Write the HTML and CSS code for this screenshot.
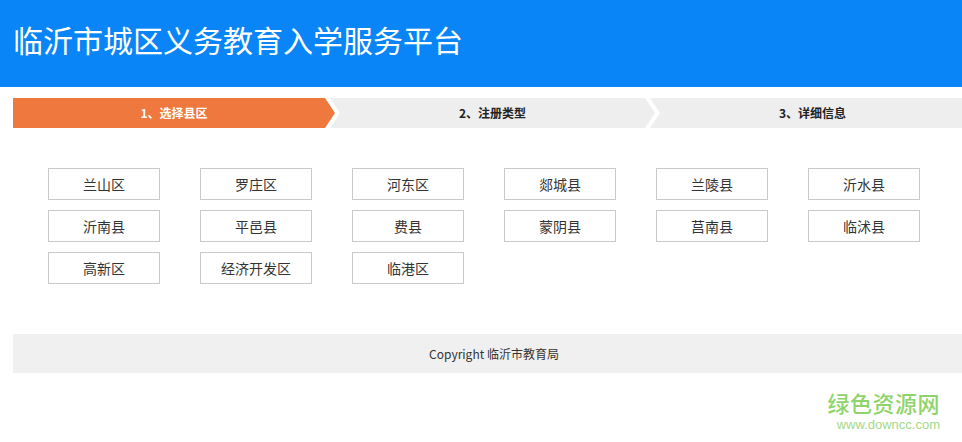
FILE: index.html
```html
<!DOCTYPE html>
<html lang="zh-CN">
<head>
<meta charset="utf-8">
<title>临沂市城区义务教育入学服务平台</title>
<link rel="stylesheet" href="styles.css">
</head>
<body>
<div class="header"><h1 class="title">临沂市城区义务教育入学服务平台</h1></div>
<div class="steps">
  <div class="step step-first step-active">1、选择县区</div>
  <div class="step step-mid">2、注册类型</div>
  <div class="step step-last">3、详细信息</div>
</div>
<div class="districts">
  <a class="district">兰山区</a>
  <a class="district">罗庄区</a>
  <a class="district">河东区</a>
  <a class="district">郯城县</a>
  <a class="district">兰陵县</a>
  <a class="district">沂水县</a>
  <a class="district">沂南县</a>
  <a class="district">平邑县</a>
  <a class="district">费县</a>
  <a class="district">蒙阴县</a>
  <a class="district">莒南县</a>
  <a class="district">临沭县</a>
  <a class="district">高新区</a>
  <a class="district">经济开发区</a>
  <a class="district">临港区</a>
</div>
<div class="footer">Copyright 临沂市教育局</div>
<div class="watermark">
  <div class="wm-cn">绿色资源网</div>
  <div class="wm-en">www.downcc.com</div>
</div>
</body>
</html>
```
FILE: styles.css
```css
html, body {
  margin: 0;
  padding: 0;
  overflow: hidden;
  background: #fff;
}
body {
  font-family: "Noto Sans CJK SC", "Noto Sans", sans-serif;
  color: #333;
  width: 962px;
}
.header {
  height: 87px;
  background: #0a85f7;
  box-sizing: border-box;
  padding: 22px 0 0 13px;
}
.title {
  margin: 0;
  font-size: 30px;
  font-weight: 400;
  line-height: 34px;
  color: #fff;
  white-space: nowrap;
}
.steps {
  display: flex;
  margin: 11px 0 0 13px;
  height: 30px;
  width: 962px;
}
.step {
  flex: none;
  height: 30px;
  line-height: 30px;
  text-align: center;
  font-size: 12px;
  font-weight: 700;
  background: #eeeeee;
  color: #222;
}
.step-first {
  width: 322px;
  clip-path: polygon(0 0, calc(100% - 10px) 0, 100% 50%, calc(100% - 10px) 100%, 0 100%);
}
.step-mid {
  width: 325px;
  margin-left: -5px;
  clip-path: polygon(0 0, calc(100% - 10px) 0, 100% 50%, calc(100% - 10px) 100%, 0 100%, 10px 50%);
}
.step-last {
  width: 325px;
  margin-left: -5px;
  clip-path: polygon(0 0, 100% 0, 100% 100%, 0 100%, 10px 50%);
}
.step-active {
  background: #ee783d;
  color: #fff;
}
.districts {
  display: grid;
  grid-template-columns: repeat(6, 112px);
  column-gap: 40px;
  row-gap: 10px;
  margin: 40px 0 0 48px;
}
.district {
  display: block;
  box-sizing: border-box;
  height: 32px;
  line-height: 30px;
  border: 1px solid #c9c9c9;
  text-align: center;
  font-size: 14px;
  color: #333;
  white-space: nowrap;
}
.footer {
  margin: 50px 0 0 13px;
  width: 962px;
  height: 39px;
  line-height: 39px;
  background: #f0f0f0;
  text-align: center;
  font-size: 12px;
  color: #333;
}
.watermark {
  margin-top: 17px;
  padding-right: 22px;
  text-align: right;
}
.wm-cn {
  font-size: 22px;
  line-height: 24px;
  font-weight: 500;
  color: #8fd46a;
  letter-spacing: 0.5px;
}
.wm-en {
  font-family: "Liberation Sans", Arial, sans-serif;
  font-size: 13px;
  line-height: 16px;
  color: #a3d98a;
  margin-top: 3px;
}
```
